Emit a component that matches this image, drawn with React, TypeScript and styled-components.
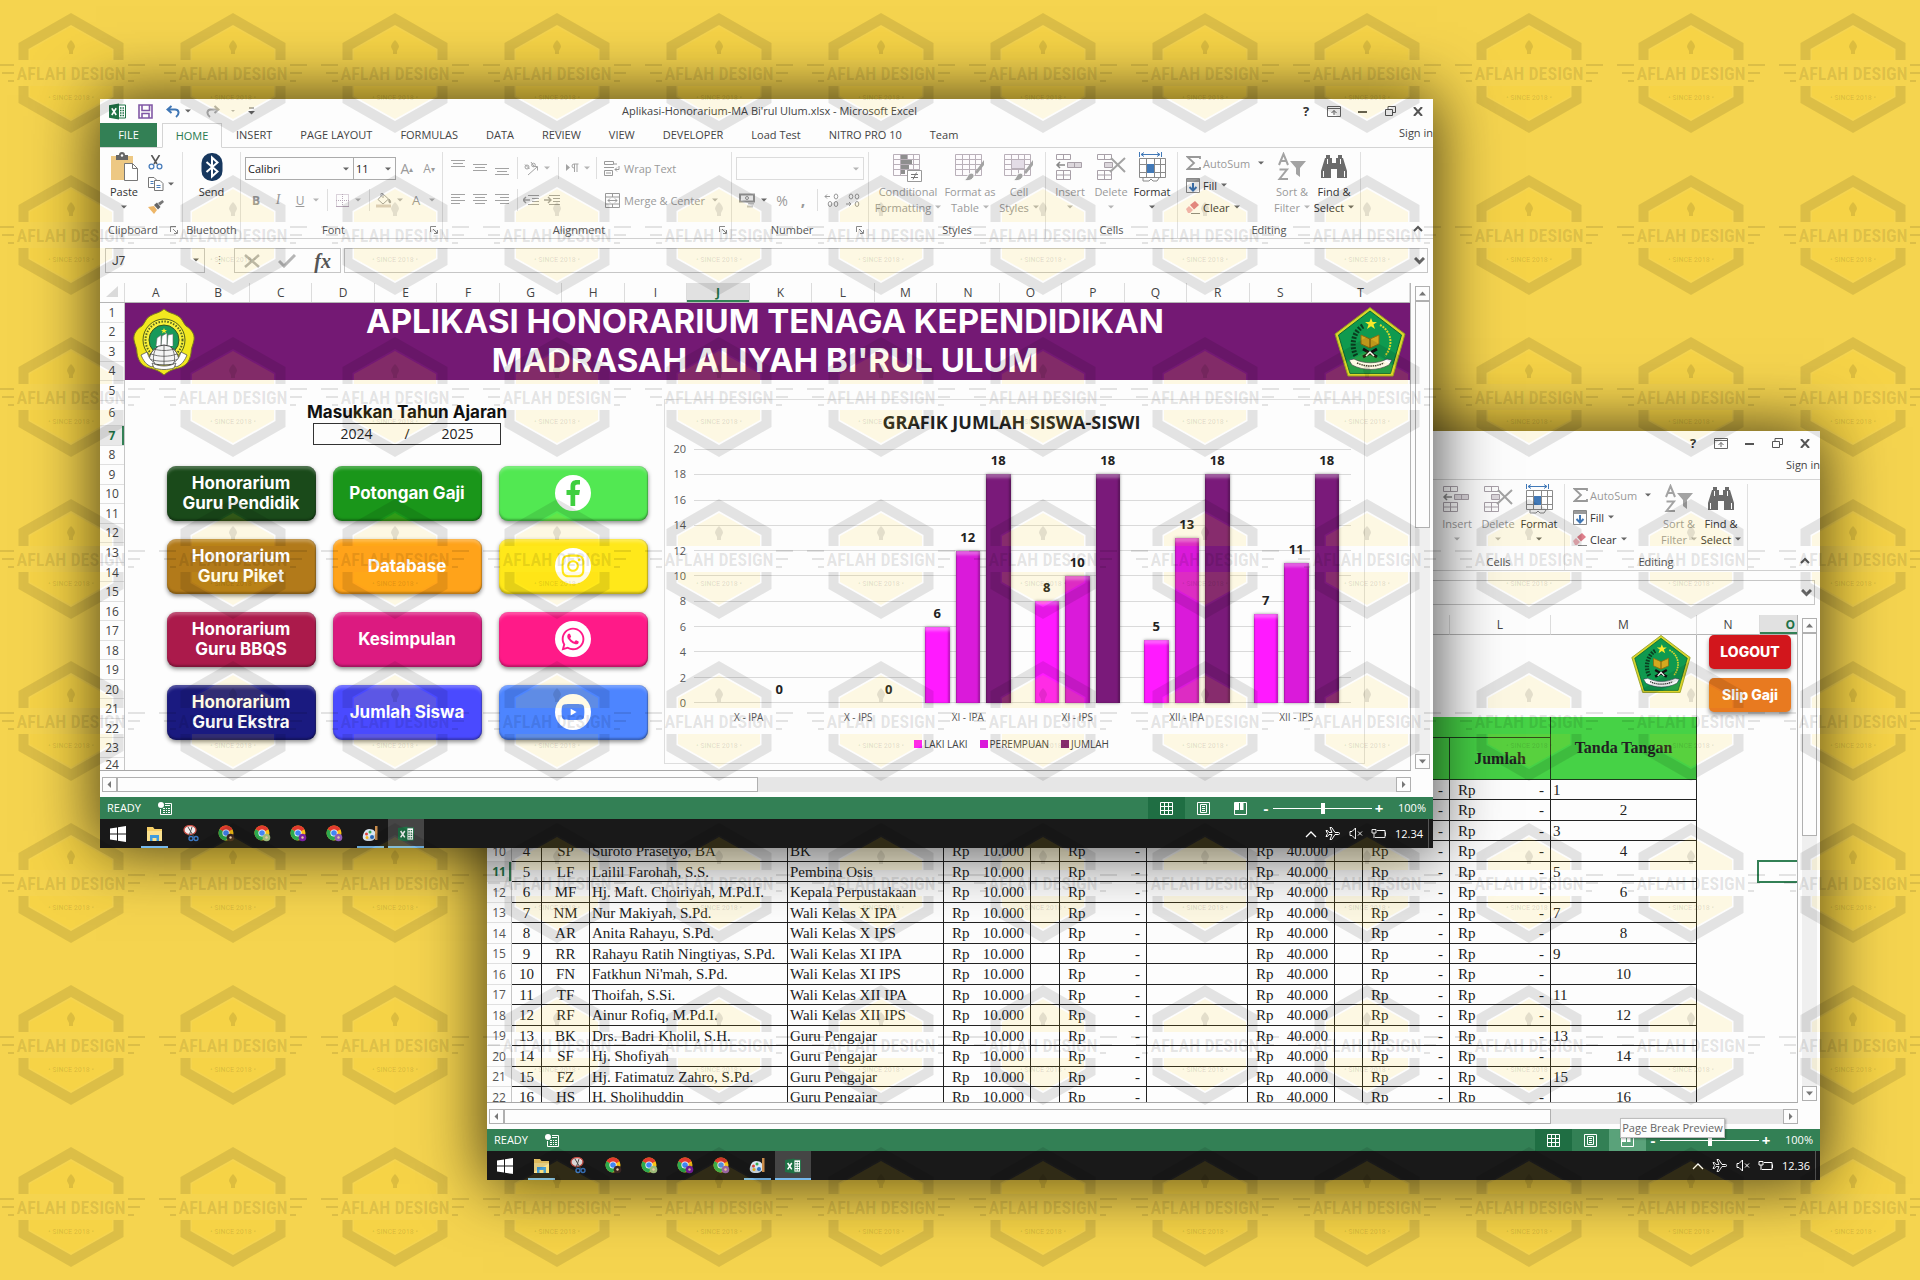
import React from "react";
import styled, { createGlobalStyle, css } from "styled-components";
import { FaInstagram, FaWhatsapp, FaYoutube } from "react-icons/fa";

const UI = `"Open Sans", "Noto Sans", sans-serif`;
const SERIF = `"Liberation Serif", serif`;
const GEO = `Inter, "Open Sans", sans-serif`;

const Global = createGlobalStyle`
  *, *::before, *::after { box-sizing: border-box; }
  body { margin: 0; font-family: ${UI}; font-size: 11px; color: #444; }
  button, input, select { font: inherit; color: inherit; margin: 0; }
  h1, h2, p { margin: 0; }
`;

/* ---------- desktop and windows ---------- */

const Desktop = styled.main`
  position: relative;
  min-height: 100vh;
  overflow: hidden;
  background: #f5d44f;
`;

const Frame = styled.section<{ $left: number; $top: number; $right: number }>`
  position: absolute;
  left: ${(p) => p.$left}px;
  right: ${(p) => p.$right}px;
  top: ${(p) => p.$top}px;
  background: #fdfdfd;
  box-shadow: 0 0 60px 4px rgba(0, 0, 0, 0.7);
`;

const TitleBar = styled.header`
  display: grid;
  grid-template-columns: 1fr auto 1fr;
  align-items: center;
  height: 24px;
  padding: 0 1px 0 7px;
`;

const TitleText = styled.p`
  color: #444;
  line-height: 24px;
`;

const QuickBar = styled.div`
  display: flex;
  align-items: center;
`;

const WindowButtons = styled.div`
  display: flex;
  justify-content: flex-end;
  align-items: center;
`;

const Plain = styled.button<{ $w?: number; $dim?: boolean }>`
  display: flex;
  align-items: center;
  justify-content: center;
  flex: none;
  width: ${(p) => (p.$w ? p.$w + "px" : "auto")};
  padding: 0;
  border: 0;
  background: none;
  color: ${(p) => (p.$dim ? "#9a9a9a" : "#333")};
  white-space: nowrap;
`;

const Tabs = styled.nav`
  display: flex;
  align-items: stretch;
  height: 25px;
  border-bottom: 1px solid #d4d4d4;
`;

const Tab = styled.button<{ $kind?: "file" | "active" }>`
  padding: 0 14px;
  border: 0;
  background: none;
  line-height: 24px;
  color: #444;
  ${(p) =>
    p.$kind === "file" &&
    css`
      width: 57px;
      margin-right: 5px;
      background: #338055;
      color: #fff;
    `}
  ${(p) =>
    p.$kind === "active" &&
    css`
      width: 60px;
      height: 25px;
      padding: 0;
      border: 1px solid #d4d4d4;
      border-bottom-color: #fdfdfd;
      background: #fdfdfd;
      color: #2a7a4e;
    `}
`;

const SignIn = styled.a`
  margin-left: auto;
  line-height: 20px;
  color: #444;
  text-decoration: none;
`;

/* ---------- ribbon ---------- */

const RibbonBar = styled.div`
  display: flex;
  height: 91px;
  padding-top: 4px;
  border-bottom: 1px solid #d0d0d0;
`;

const Group = styled.div<{ $w: number }>`
  display: flex;
  flex-direction: column;
  flex: none;
  width: ${(p) => p.$w}px;
  border-right: 1px solid #e0e0e0;
`;

const GroupBody = styled.div<{ $pad?: number }>`
  display: flex;
  height: 70px;
  padding-left: ${(p) => p.$pad ?? 0}px;
`;

const GroupLabel = styled.div<{ $launcher?: boolean }>`
  display: grid;
  grid-template-columns: ${(p) => (p.$launcher ? "1fr 16px" : "1fr")};
  align-items: center;
  justify-items: center;
  height: 16px;
  line-height: 16px;
  color: #555;
  white-space: nowrap;
`;

const Col = styled.div<{ $w?: number }>`
  display: flex;
  flex-direction: column;
  flex: none;
  width: ${(p) => (p.$w ? p.$w + "px" : "auto")};
`;

const Line = styled.div<{ $h?: number }>`
  display: flex;
  align-items: center;
  height: ${(p) => p.$h ?? 32}px;
`;

const Rule = styled.span<{ $w?: number }>`
  display: flex;
  justify-content: center;
  width: ${(p) => p.$w ?? 10}px;
  &::before {
    content: "";
    width: 1px;
    height: 22px;
    background: #dedede;
  }
`;

const Big = styled.button<{ $w: number; $dim?: boolean }>`
  display: flex;
  flex-direction: column;
  align-items: center;
  flex: none;
  width: ${(p) => p.$w}px;
  padding: 0;
  border: 0;
  background: none;
  line-height: 16px;
  color: ${(p) => (p.$dim ? "#9a9a9a" : "#333")};
  white-space: nowrap;
  svg:first-child { margin-bottom: 2px; }
`;

const Row = styled.span`
  display: flex;
  align-items: center;
  gap: 4px;
  height: 16px;
`;

const Picker = styled.label<{ $w: number; $dim?: boolean }>`
  position: relative;
  flex: none;
  width: ${(p) => p.$w}px;
  height: 23px;
  margin-right: -1px;
  select {
    width: 100%;
    height: 100%;
    padding: 0 2px;
    appearance: none;
    border: 1px solid ${(p) => (p.$dim ? "#dcdcdc" : "#ababab")};
    border-radius: 0;
    background: #fdfdfd;
    color: #222;
  }
  svg {
    position: absolute;
    right: 5px;
    top: 10px;
    pointer-events: none;
  }
`;

const Glyph = styled.span<{ $size?: number; $bold?: boolean; $italic?: boolean; $under?: boolean }>`
  font-size: ${(p) => p.$size ?? 12}px;
  font-weight: ${(p) => (p.$bold ? 700 : 400)};
  font-style: ${(p) => (p.$italic ? "italic" : "normal")};
  text-decoration: ${(p) => (p.$under ? "underline" : "none")};
  font-family: ${(p) => (p.$italic ? SERIF : UI)};
`;

const Caret = ({ dim }: { dim?: boolean }) => (
  <svg width="6" height="4" viewBox="0 0 6 4"><path d="M0 .5h6L3 3.5z" fill={dim ? "#b5b5b5" : "#666"} /></svg>
);

const Launcher = () => (
  <svg width="8" height="8" viewBox="0 0 8 8" fill="none" stroke="#888"><path d="M.5 6V.5H6M3 3l4 4M7.500 4v3.500H4" /></svg>
);

const ExcelIcon = ({ s = 17 }: { s?: number }) => (
  <svg width={s} height={s} viewBox="0 0 17 17">
    <path d="M9 2h7.500v13H9z" fill="#fff" stroke="#1f7246" />
    <path d="M11 5h1.500M13.500 5H15M11 7.500h1.500M13.500 7.500H15M11 10h1.500M13.500 10H15M11 12.500h1.500M13.500 12.500H15" stroke="#1f7246" strokeWidth="1.300" />
    <path d="M0 2.200 10 .5v16L0 14.800z" fill="#1f7246" />
    <path d="M2.800 5.300 7.200 12M7.200 5.300 2.800 12" stroke="#fff" strokeWidth="1.600" />
  </svg>
);

const SaveIcon = () => (
  <svg width="15" height="15" viewBox="0 0 15 15" fill="none" stroke="#8058a5" strokeWidth="1.600">
    <path d="M1 1h13v13H1z" /><path d="M4 1v5.500h7.500V1M4 14v-4.500h7V14" />
  </svg>
);

const UndoIcon = ({ redo }: { redo?: boolean }) => (
  <svg width="15" height="13" viewBox="0 0 15 13" fill="none" stroke={redo ? "#b0b0b0" : "#3f76b5"} strokeWidth="2">
    <path d={redo ? "M9.500 1l4 3.500-4 3.500M13 4.500H6C2 4.500 1 9 5 12" : "M5.500 1l-4 3.500 4 3.500M2 4.500h7c4 0 5 4.500 1 7.500"} />
  </svg>
);

const PasteIcon = () => (
  <svg width="28" height="30" viewBox="0 0 28 30">
    <path d="M1 4h22v24H1z" fill="#edc883" />
    <path d="M6 3h3a3 3 0 0 1 6 0h3v5H6z" fill="#666" /><circle cx="12" cy="3.500" r="1.200" fill="#fff" />
    <path d="M14.500 11.500h8l5 5v12h-13z" fill="#fff" stroke="#777" /><path d="M22.500 11.500v5h5" fill="none" stroke="#777" />
  </svg>
);

const ScissorsIcon = () => (
  <svg width="15" height="15" viewBox="0 0 15 15" fill="none">
    <path d="M3.500 0l5.500 9M11.500 0L6 9" stroke="#555" strokeWidth="1.600" />
    <circle cx="3.500" cy="11.500" r="2.400" stroke="#4a7ebb" strokeWidth="1.300" /><circle cx="11.500" cy="11.500" r="2.400" stroke="#4a7ebb" strokeWidth="1.300" />
  </svg>
);

const CopyIcon = () => (
  <svg width="16" height="14" viewBox="0 0 16 14" fill="#fff" stroke="#777">
    <path d="M.5.5H6l2.500 2.500v7.500h-8z" /><path d="M6.500 3.500H12l3 3v7H6.500z" /><path d="M2.500 4.500h3M2.500 6.500h3M8.500 8.500h4M8.500 10.500h4" stroke="#4a7ebb" />
  </svg>
);

const BrushIcon = () => (
  <svg width="16" height="14" viewBox="0 0 16 14">
    <path d="M0 7l6-1 3 4-3 4z" fill="#edb668" /><path d="M6 5l3-2.500 3.500 4.500L10 9.500z" fill="#666" /><path d="M10 3l4.500-3L16 2l-4 3.500z" fill="#777" />
  </svg>
);

const BluetoothIcon = () => (
  <svg width="22" height="30" viewBox="0 0 22 30">
    <rect x=".5" y="1" width="21" height="28" rx="10" fill="#17375e" />
    <path d="M5.500 10l11 9.500L11 24.500V5.500l5.500 5-11 9.500" fill="none" stroke="#fff" strokeWidth="2" />
  </svg>
);

const LinesIcon = ({ rows, drop = 0 }: { rows: [number, number][]; drop?: number }) => (
  <svg width="14" height="20" viewBox="0 0 14 20" stroke="#a3a3a3">
    {rows.map(([x, w], i) => <path key={i} d={`M${x} ${i * 3 + 4.5 + drop}h${w}`} />)}
  </svg>
);

const BorderIcon = () => (
  <svg width="13" height="13" viewBox="0 0 13 13" fill="none" stroke="#b8a8b8"><path d="M.5.5h12v12H.5zM6.500 0v13M0 6.500h13" strokeDasharray="1 1" /><path d="M0 12.500h13" /></svg>
);

const BucketIcon = () => (
  <svg width="16" height="16" viewBox="0 0 16 16" fill="none" stroke="#a3a3a3">
    <path d="M7 2l5.500 5L7 12 2 7.500z" /><path d="M5 5V1.500h2V6" /><path d="M13 7c2 2 2 4 1 4s-1.500-2-1-4z" fill="#a3a3a3" /><path d="M0 14h15" stroke="#d8cfc6" strokeWidth="3" />
  </svg>
);

const OrientIcon = () => (
  <svg width="16" height="15" viewBox="0 0 16 15" fill="none" stroke="#a3a3a3">
    <circle cx="4" cy="6" r="2" /><path d="M6.500 8L2 3.500M8 1l3.500 5" /><circle cx="10.500" cy="4" r="1.800" /><path d="M5 14l9-8M14.500 9.500V5.500h-4" />
  </svg>
);

const IndentIcon = ({ out }: { out?: boolean }) => (
  <svg width="16" height="12" viewBox="0 0 16 12" fill="none" stroke="#a3a3a3">
    <path d="M5 1.500h11M9 4.500h7M9 7.500h7M5 10.500h11" /><path d={out ? "M0 6h7M3 3L0 6l3 3" : "M0 6h7M4 3l3 3-3 3"} strokeWidth="1.400" />
  </svg>
);

const ParaIcon = () => (
  <svg width="13" height="10" viewBox="0 0 13 10"><path d="M0 1l4 3.500L0 8z" fill="#a3a3a3" /><path d="M8.500 9V1M11 9V1M12.500 1H8a2 2 0 0 0 0 4" fill="none" stroke="#a3a3a3" /></svg>
);

const WrapIcon = () => (
  <svg width="16" height="15" viewBox="0 0 16 15" fill="none" stroke="#999"><path d="M.5.5h9v3h-9zM0 6.500h10M.5 9.500h8v5h-8zM2 12h5M10 3h3M15 5v3.500h-4M13 6.500l-2 2 2 2" /></svg>
);

const MergeIcon = () => (
  <svg width="15" height="15" viewBox="0 0 15 15" fill="none" stroke="#999"><path d="M.5.5h14v14H.5zM.5 4h14M.5 11h14M7.500.5V4M7.500 11v3.500M3 7.500h9M5 5.500l-2 2 2 2M10 5.500l2 2-2 2" /></svg>
);

const MoneyIcon = () => (
  <svg width="17" height="15" viewBox="0 0 17 15" fill="none" stroke="#999"><path d="M1 1.500h14v7H1z" strokeWidth="2" /><circle cx="8" cy="5" r="1.500" /><path d="M9 10.500h6M8 13.500h6" strokeWidth="2" stroke="#c5c5c5" /></svg>
);

const GridBrushIcon = ({ kind }: { kind: "cond" | "table" | "cell" }) => (
  <svg width="30" height="30" viewBox="0 0 30 30" fill="none" stroke="#b9b0b9">
    <path d="M.5 2.500h26v21H.5zM.5 7.500h26M.5 12.500h26M.5 17.500h26M7.500 2.500v21M14.500 2.500v21M20.500 2.500v21" fill="#fdfbfd" />
    {kind === "cond" && <><path d="M8 3h6v4H8zM8 8h11v4H8zM8 13h8v4H8zM8 18h4v4H8z" fill="#8e8e8e" stroke="none" /><path d="M14.500 18.500h14v11h-14z" fill="#fff" stroke="#999" /><path d="M18 22.500h7M18 25.500h7M23.500 20.500l-3.500 7" stroke="#777" /></>}
    {kind === "cell" && <path d="M7.500 7.500h13v9h-13z" fill="#e3dce6" />}
    {kind !== "cond" && <><path d="M29 8l-9 12 2 2 7-9z" fill="#a3a3a3" stroke="none" /><path d="M9 28c3 0 3-6 7-7 3 0 4 3 2 5-2 3-6 3-9 2z" fill="#a3a3a3" stroke="#fff" /></>}
  </svg>
);

const CellsIcon = ({ kind }: { kind: "ins" | "del" }) => (
  <svg width="30" height="30" viewBox="0 0 30 30" fill="none" stroke="#a8a0a8">
    <path d="M1.500 2.500h14v5h-14zM8.500 2.500v5M1.500 18.500h14v9h-14zM8.500 18.500v9M1.500 23h14" />
    {kind === "ins"
      ? <><path d="M12.500 10.500h14v5h-14zM19.500 10.500v5" fill="#dcd7dc" /><path d="M10 13H2M5 10l-3 3 3 3" stroke="#888" strokeWidth="1.500" /></>
      : <><path d="M8.500 10.500h8v5h-8z" fill="#dcd7dc" /><path d="M15 6l14 14M29 6L14 20" stroke="#a3a3a3" strokeWidth="2" /></>}
  </svg>
);

const FormatIcon = () => (
  <svg width="30" height="30" viewBox="0 0 30 30" fill="none" stroke="#8a8a8a">
    <path d="M2.500 0v5M24.500 0v5M4 2.500h19M7 .5l-3 2 3 2M20 .5l3 2-3 2" stroke="#4179b8" />
    <path d="M2.500 6.500h26v19h-26zM2.500 12.500h26M2.500 20.500h26M9.500 6.500v19M17.500 6.500v19M23.500 6.500v19" fill="#fff" />
    <path d="M10 12h7v9h-7z" fill="#4179b8" stroke="none" /><path d="M6 26v3h6l2-2 2 2h4l2-3" />
  </svg>
);

const FillIcon = () => (
  <svg width="14" height="15" viewBox="0 0 14 15" fill="none"><path d="M.5.5h13v14H.5z" stroke="#888" /><path d="M1 1h12v3H1z" fill="#999" /><path d="M7 5v7.500M3.500 9L7 12.500 10.500 9" stroke="#3f76b5" strokeWidth="2" /></svg>
);

const EraserIcon = () => (
  <svg width="14" height="13" viewBox="0 0 14 13"><path d="M0 8l3-3 4 4-3 3H2z" fill="#efb0b8" /><path d="M4 4l5-4 4 4-5 4.500z" fill="#df7f8c" /><path d="M5 12.500h9" stroke="#888" /></svg>
);

const SortIcon = () => (
  <svg width="30" height="30" viewBox="0 0 30 30" fill="none" stroke="#a3a3a3" strokeWidth="2">
    <path d="M2 13L6.500 2 11 13M3.500 9h6M2.500 17.500h7.500L2.500 27H11" /><path d="M13 9h16l-6 7v9l-4-3v-6z" fill="#a3a3a3" stroke="none" />
  </svg>
);

const BinocIcon = () => (
  <svg width="28" height="30" viewBox="0 0 28 30" fill="#6b6b6b">
    <path d="M6 3h4v3h2v5h4V6h2V3h4v3h1l4 13v7H17v-9h-6v9H1v-7L5 6h1z" /><path d="M3.500 19v6M24.500 19v6M7.500 7v5M20.500 7v5" stroke="#fdfdfd" />
  </svg>
);

const SigmaIcon = () => (
  <svg width="15" height="14" viewBox="0 0 15 14" fill="none" stroke="#999" strokeWidth="1.800"><path d="M14 3V1H1.500L8 7l-6.500 6H14v-2" /></svg>
);

const DecimalIcon = ({ more }: { more?: boolean }) => (
  <svg width="16" height="15" viewBox="0 0 16 15" fill="none" stroke="#999">
    {more
      ? <><path d="M6 3.500H1M3 1.500l-2 2 2 2" /><ellipse cx="12" cy="3.500" rx="1.800" ry="2.500" /><ellipse cx="6" cy="11" rx="1.800" ry="2.500" /><ellipse cx="12" cy="11" rx="1.800" ry="2.500" /></>
      : <><ellipse cx="6" cy="3.500" rx="1.800" ry="2.500" /><ellipse cx="12" cy="3.500" rx="1.800" ry="2.500" /><path d="M1 11h5M4 9l2 2-2 2" /><ellipse cx="12" cy="11" rx="1.800" ry="2.500" /></>}
  </svg>
);

const ALIGN: Record<string, [number, number][]> = {
  vertical: [[0, 14], [2, 10], [0, 14]],
  left: [[0, 14], [0, 9], [0, 14], [0, 9]],
  center: [[0, 14], [2, 10], [0, 14], [2, 10]],
  right: [[0, 14], [5, 9], [0, 14], [5, 9]],
};

const Collapse = styled.button`
  align-self: flex-end;
  margin: 0 10px 2px auto;
  padding: 0;
  border: 0;
  background: none;
`;

function Label({ children, launcher }: { children: React.ReactNode; launcher?: boolean }) {
  return (
    <GroupLabel $launcher={launcher}>
      <span>{children}</span>
      {launcher && <Launcher />}
    </GroupLabel>
  );
}

function Ribbon() {
  return (
    <RibbonBar>
      <Group $w={83}>
        <GroupBody>
          <Big $w={48}><PasteIcon /><span>Paste</span><Row><Caret /></Row></Big>
          <Col $w={34}>
            <Line $h={20}><Plain $w={15} aria-label="Cut"><ScissorsIcon /></Plain></Line>
            <Line $h={24}><Plain $w={16} aria-label="Copy"><CopyIcon /></Plain><Plain $w={14} aria-label="Copy options"><Caret /></Plain></Line>
            <Line $h={22}><Plain $w={16} aria-label="Format painter"><BrushIcon /></Plain></Line>
          </Col>
        </GroupBody>
        <Label launcher>Clipboard</Label>
      </Group>
      <Group $w={58}>
        <GroupBody><Big $w={57}><BluetoothIcon /><span>Send</span></Big></GroupBody>
        <Label>Bluetooth</Label>
      </Group>
      <Group $w={202}>
        <GroupBody $pad={4}>
          <Col>
            <Line>
              <Picker $w={109} aria-label="Font"><select><option>Calibri</option></select><Caret /></Picker>
              <Picker $w={43} aria-label="Font size"><select><option>11</option></select><Caret /></Picker>
              <Plain $w={24} $dim><Glyph $size={14}>A</Glyph><Glyph $size={8}>▴</Glyph></Plain>
              <Plain $w={20} $dim><Glyph $size={12}>A</Glyph><Glyph $size={8}>▾</Glyph></Plain>
            </Line>
            <Line>
              <Plain $w={22} $dim><Glyph $bold>B</Glyph></Plain>
              <Plain $w={22} $dim><Glyph $size={14} $italic>I</Glyph></Plain>
              <Plain $w={22} $dim><Glyph $under>U</Glyph></Plain>
              <Plain $w={10} aria-label="Underline options"><Caret dim /></Plain>
              <Rule $w={12} />
              <Plain $w={18} aria-label="Borders"><BorderIcon /></Plain>
              <Plain $w={14} aria-label="Border options"><Caret dim /></Plain>
              <Rule $w={8} />
              <Plain $w={22} aria-label="Fill color"><BucketIcon /></Plain>
              <Plain $w={10} aria-label="Fill options"><Caret dim /></Plain>
              <Plain $w={22} $dim><Glyph $size={13}>A</Glyph></Plain>
              <Plain $w={10} aria-label="Font color options"><Caret dim /></Plain>
            </Line>
          </Col>
        </GroupBody>
        <Label launcher>Font</Label>
      </Group>
      <Group $w={289}>
        <GroupBody $pad={4}>
          <Col $w={153}>
            <Line>
              <Plain $w={22} aria-label="Top align"><LinesIcon rows={ALIGN.vertical} drop={-2} /></Plain>
              <Plain $w={22} aria-label="Middle align"><LinesIcon rows={ALIGN.vertical} drop={2} /></Plain>
              <Plain $w={22} aria-label="Bottom align"><LinesIcon rows={ALIGN.vertical} drop={6} /></Plain>
              <Rule $w={8} />
              <Plain $w={20} aria-label="Orientation"><OrientIcon /></Plain>
              <Plain $w={12} aria-label="Orientation options"><Caret dim /></Plain>
              <Rule $w={10} />
              <Plain $w={18} aria-label="Text direction"><ParaIcon /></Plain>
              <Plain $w={12} aria-label="Direction options"><Caret dim /></Plain>
              <Rule $w={7} />
            </Line>
            <Line>
              <Plain $w={22} aria-label="Align left"><LinesIcon rows={ALIGN.left} /></Plain>
              <Plain $w={22} aria-label="Center"><LinesIcon rows={ALIGN.center} /></Plain>
              <Plain $w={22} aria-label="Align right"><LinesIcon rows={ALIGN.right} /></Plain>
              <Rule $w={8} />
              <Plain $w={20} aria-label="Decrease indent"><IndentIcon out /></Plain>
              <Plain $w={22} aria-label="Increase indent"><IndentIcon /></Plain>
            </Line>
          </Col>
          <Col>
            <Line><Plain $w={24} $dim aria-label="Wrap"><WrapIcon /></Plain><Plain $dim>Wrap Text</Plain></Line>
            <Line><Plain $w={24} $dim aria-label="Merge"><MergeIcon /></Plain><Plain $dim>Merge &amp; Center</Plain><Plain $w={20} aria-label="Merge options"><Caret dim /></Plain></Line>
          </Col>
        </GroupBody>
        <Label launcher>Alignment</Label>
      </Group>
      <Group $w={137}>
        <GroupBody $pad={4}>
          <Col>
            <Line><Picker $w={128} $dim aria-label="Number format"><select><option></option></select><Caret dim /></Picker></Line>
            <Line>
              <Plain $w={22} aria-label="Accounting"><MoneyIcon /></Plain>
              <Plain $w={12} aria-label="Accounting options"><Caret /></Plain>
              <Plain $w={24} $dim><Glyph $size={14}>%</Glyph></Plain>
              <Plain $w={18} $dim><Glyph $size={16} $bold>,</Glyph></Plain>
              <Rule />
              <Plain $w={20} aria-label="Increase decimal"><DecimalIcon more /></Plain>
              <Plain $w={22} aria-label="Decrease decimal"><DecimalIcon /></Plain>
            </Line>
          </Col>
        </GroupBody>
        <Label launcher>Number</Label>
      </Group>
      <Group $w={177}>
        <GroupBody $pad={5}>
          <Big $w={68} $dim><GridBrushIcon kind="cond" /><span>Conditional</span><Row>Formatting<Caret dim /></Row></Big>
          <Big $w={56} $dim><GridBrushIcon kind="table" /><span>Format as</span><Row>Table<Caret dim /></Row></Big>
          <Big $w={42} $dim><GridBrushIcon kind="cell" /><span>Cell</span><Row>Styles<Caret dim /></Row></Big>
        </GroupBody>
        <Label>Styles</Label>
      </Group>
      <Group $w={132}>
        <GroupBody $pad={4}>
          <Big $w={40} $dim><CellsIcon kind="ins" /><span>Insert</span><Row><Caret dim /></Row></Big>
          <Big $w={42} $dim><CellsIcon kind="del" /><span>Delete</span><Row><Caret dim /></Row></Big>
          <Big $w={40}><FormatIcon /><span>Format</span><Row><Caret /></Row></Big>
        </GroupBody>
        <Label>Cells</Label>
      </Group>
      <Group $w={183}>
        <GroupBody $pad={5}>
          <Col $w={88}>
            <Line $h={22}><Plain $w={20} aria-label="Sum"><SigmaIcon /></Plain><Plain $dim>AutoSum</Plain><Plain $w={22} aria-label="Sum options"><Caret /></Plain></Line>
            <Line $h={22}><Plain $w={20} aria-label="Fill down"><FillIcon /></Plain><Plain><Row>Fill<Caret /></Row></Plain></Line>
            <Line $h={22}><Plain $w={20} aria-label="Erase"><EraserIcon /></Plain><Plain><Row>Clear<Caret /></Row></Plain></Line>
          </Col>
          <Big $w={42} $dim><SortIcon /><span>Sort &amp;</span><Row>Filter<Caret dim /></Row></Big>
          <Big $w={42}><BinocIcon /><span>Find &amp;</span><Row>Select<Caret /></Row></Big>
        </GroupBody>
        <Label>Editing</Label>
      </Group>
      <Collapse aria-label="Collapse ribbon">
        <svg width="10" height="8" viewBox="0 0 10 8" fill="none" stroke="#555" strokeWidth="2"><path d="M1 6l4-4 4 4" /></svg>
      </Collapse>
    </RibbonBar>
  );
}

/* ---------- formula bar ---------- */

const FormulaRow = styled.div`
  display: flex;
  align-items: stretch;
  height: 25px;
  margin: 9px 5px 10px;
`;

const NameBox = styled.label`
  position: relative;
  width: 100px;
  input {
    width: 100%;
    height: 100%;
    padding: 0 6px;
    border: 1px solid #c6c6c6;
    background: #fdfdfd;
    font: 12px Roboto, sans-serif;
  }
  svg { position: absolute; right: 6px; top: 10px; }
`;

const Dots = styled.span`
  width: 29px;
  text-align: center;
  line-height: 24px;
  color: #888;
`;

const FxBox = styled.div`
  display: flex;
  align-items: center;
  justify-content: space-around;
  width: 107px;
  margin-right: 3px;
  border: 1px solid #c6c6c6;
`;

const Fx = styled.i`
  font: italic 700 20px/22px ${SERIF};
  color: #555;
`;

const FormulaInput = styled.div`
  position: relative;
  flex: 1;
  input {
    width: 100%;
    height: 100%;
    border: 1px solid #c6c6c6;
    background: #fdfdfd;
  }
  svg { position: absolute; right: 3px; top: 9px; }
`;

function FormulaBar({ cell }: { cell: string }) {
  return (
    <FormulaRow>
      <NameBox><input aria-label="Name box" defaultValue={cell} /><Caret /></NameBox>
      <Dots>⋮</Dots>
      <FxBox>
        <Plain aria-label="Cancel"><svg width="16" height="14" viewBox="0 0 16 14"><path d="M1 1l14 12M15 1L1 13" stroke="#b5b5b5" strokeWidth="2.500" /></svg></Plain>
        <Plain aria-label="Enter"><svg width="18" height="14" viewBox="0 0 18 14"><path d="M1 7l5 5L17 1" fill="none" stroke="#b5b5b5" strokeWidth="3" /></svg></Plain>
        <Plain><Fx>fx</Fx></Plain>
      </FxBox>
      <FormulaInput>
        <input aria-label="Formula" />
        <svg width="11" height="8" viewBox="0 0 11 8" fill="none" stroke="#666" strokeWidth="3"><path d="M1 1l4.500 4.500L10 1" /></svg>
      </FormulaInput>
    </FormulaRow>
  );
}

/* ---------- scroll bars, status bar, task bar ---------- */

const Work = styled.div`
  display: flex;
`;

const Pane = styled.div`
  position: relative;
  flex: 1;
  min-width: 0;
  height: 488px;
  overflow: hidden;
  border-right: 1px solid #b5b5b5;
  border-bottom: 1px solid #a8a8a8;
`;

const VTrack = styled.div`
  display: flex;
  flex-direction: column;
  width: 15px;
  margin: 3px 3px 2px 4px;
  background: #efefef;
`;

const HTrack = styled.div`
  display: flex;
  height: 15px;
  margin: 6px 22px 5px 2px;
  background: #e6e6e6;
`;

const Arrow = styled.button<{ $end?: boolean }>`
  display: flex;
  align-items: center;
  justify-content: center;
  flex: none;
  width: 15px;
  height: 15px;
  padding: 0;
  border: 1px solid #b0b0b0;
  background: #fdfdfd;
  ${(p) => p.$end && css`margin-left: auto;`}
`;

const VThumb = styled.div<{ $share: number }>`
  flex: 0 0 ${(p) => p.$share}%;
  margin-bottom: auto;
  border: 1px solid #b0b0b0;
  background: #fdfdfd;
`;

const HThumb = styled.div<{ $share: number }>`
  flex: 0 0 ${(p) => p.$share}%;
  border: 1px solid #b0b0b0;
  background: #fdfdfd;
`;

const Tri = ({ d }: { d: string }) => <svg width="7" height="7" viewBox="0 0 7 7"><path d={d} fill="#777" /></svg>;

function VScroll({ share }: { share: number }) {
  return (
    <VTrack>
      <Arrow aria-label="Scroll up"><Tri d="M0 5.500h7L3.500 1.500z" /></Arrow>
      <VThumb $share={share} />
      <Arrow aria-label="Scroll down"><Tri d="M0 1.500h7L3.500 5.500z" /></Arrow>
    </VTrack>
  );
}

function HScroll({ share }: { share: number }) {
  return (
    <HTrack>
      <Arrow aria-label="Scroll left"><Tri d="M5 0v7L1.500 3.500z" /></Arrow>
      <HThumb $share={share} />
      <Arrow $end aria-label="Scroll right"><Tri d="M2 0v7l3.500-3.500z" /></Arrow>
    </HTrack>
  );
}

const Status = styled.footer`
  display: flex;
  align-items: stretch;
  height: 22px;
  padding: 0 7px;
  background: #338055;
  color: #fff;
  line-height: 22px;
`;

const Ready = styled.span`
  width: 51px;
`;

const StatusIcon = styled.span`
  display: flex;
  align-items: center;
  margin-right: auto;
`;

const View = styled.button<{ $tone?: "on" | "hover" }>`
  position: relative;
  display: flex;
  align-items: center;
  justify-content: center;
  width: 37px;
  padding: 0;
  border: 0;
  background: ${(p) => (p.$tone === "on" ? "#1f6e43" : p.$tone === "hover" ? "#5aa27a" : "none")};
`;

const Tip = styled.span`
  position: absolute;
  right: -79px;
  top: -11px;
  z-index: 1;
  width: 105px;
  height: 20px;
  border: 1px solid #bdbdbd;
  background: #fdfdfd;
  box-shadow: 1px 1px 2px rgba(0, 0, 0, 0.3);
  color: #666;
  line-height: 18px;
  text-align: center;
  white-space: nowrap;
`;

const ZoomRow = styled.div`
  display: flex;
  align-items: center;
  color: #fff;
  button { width: 14px; color: #fff; font-weight: 700; font-size: 15px; }
  input {
    width: 99px;
    height: 16px;
    appearance: none;
    background: linear-gradient(#fff, #fff) center / 100% 1px no-repeat;
  }
  input::-webkit-slider-thumb {
    appearance: none;
    width: 4px;
    height: 11px;
    background: #fff;
  }
  output { width: 40px; text-align: right; }
`;

function StatusBar({ hover }: { hover?: boolean }) {
  return (
    <Status>
      <Ready>READY</Ready>
      <StatusIcon>
        <svg width="14" height="13" viewBox="0 0 14 13" fill="none" stroke="#fff"><circle cx="3" cy="3" r="3" fill="#fff" stroke="none" /><path d="M7 1.500h6.500v11h-11V7" /><path d="M7 3.500h5M5 6.500h2M8 6.500h1M10 6.500h2M5 8.500h2M8 8.500h1M10 8.500h2M5 10.500h2M8 10.500h1M10 10.500h2" /></svg>
      </StatusIcon>
      <View $tone="on" aria-label="Normal view">
        <svg width="13" height="13" viewBox="0 0 13 13" fill="none" stroke="#fff"><path d="M.5.5h12v12H.5zM4.500 0v13M8.500 0v13M0 4.500h13M0 8.500h13" /></svg>
      </View>
      <View aria-label="Page layout view">
        <svg width="13" height="13" viewBox="0 0 13 13" fill="none" stroke="#fff"><path d="M.5.5h12v12H.5zM3.500 2.500h6v8h-6zM5 4.500h3M5 6.500h3M5 8.500h3" /></svg>
      </View>
      <View $tone={hover ? "hover" : undefined} aria-label="Page break view">
        <svg width="13" height="13" viewBox="0 0 13 13"><path d="M.5.5h12v12H.5z" fill="none" stroke="#fff" /><path d="M1 1h4v7H1zM6 1h3.500v7H6z" fill="#fff" /></svg>
        {hover && <Tip>Page Break Preview</Tip>}
      </View>
      <ZoomRow>
        <Plain>-</Plain>
        <input type="range" aria-label="Zoom" defaultValue={50} />
        <Plain>+</Plain>
        <output>100%</output>
      </ZoomRow>
    </Status>
  );
}

const Taskbar = styled.footer`
  display: flex;
  height: 29px;
  background: #191919;
  color: #fff;
`;

const Task = styled.button<{ $open?: boolean; $active?: boolean }>`
  display: flex;
  align-items: center;
  justify-content: center;
  width: 36px;
  padding: 0;
  border: 0;
  background: ${(p) => (p.$active ? "#454545" : "none")};
  ${(p) =>
    (p.$open || p.$active) &&
    css`
      background-image: linear-gradient(#76b9ed, #76b9ed);
      background-repeat: no-repeat;
      background-position: bottom;
      background-size: ${p.$active ? "100%" : "27px"} 2px;
    `}
`;

const Tray = styled.div`
  display: flex;
  align-items: center;
  margin: 0 4px 0 auto;
  padding-right: 4px;
  border-right: 1px solid #555;
  gap: 8px;
  time { width: 29px; font-size: 11px; white-space: nowrap; }
`;

const Chrome = ({ badge }: { badge: string }) => (
  <svg width="17" height="17" viewBox="0 0 17 17">
    <circle cx="8" cy="8" r="7.500" fill="#fbc116" />
    <path d="M8 8L1.500 4.300A7.500 7.500 0 0 1 14.500 4.300z" fill="#e33b2e" />
    <path d="M8 8L1.500 4.300A7.500 7.500 0 0 0 8 15.500l3-5z" fill="#2da94f" />
    <circle cx="8" cy="8" r="3.600" fill="#fff" /><circle cx="8" cy="8" r="2.800" fill="#4285f4" />
    <circle cx="12.500" cy="12.500" r="3.800" fill={badge} />
    <circle cx="12.500" cy="12.500" r="1.200" fill="#e9c7a5" />
  </svg>
);

function TaskBar({ time }: { time: string }) {
  return (
    <Taskbar>
      <Task aria-label="Start">
        <svg width="16" height="16" viewBox="0 0 16 16" fill="#fff"><path d="M0 2.500l7-1v6H0zM8 1.300L16 0v7.500H8zM0 8.500h7v6l-7-1zM8 8.500h8V16l-8-1.300z" /></svg>
      </Task>
      <Task $open aria-label="Files">
        <svg width="17" height="16" viewBox="0 0 17 16"><path d="M1 1h6l1.500 2H16v12H1z" fill="#f5cf68" /><path d="M1 5h15v10H1z" fill="#fbe28f" /><path d="M4 15V9h9v6h-2.500v-3h-4v3z" fill="#3f9ddd" /></svg>
      </Task>
      <Task aria-label="Snipping tool">
        <svg width="17" height="17" viewBox="0 0 17 17" fill="none"><ellipse cx="8" cy="5" rx="6" ry="4.500" fill="#f3eeee" stroke="#c84f45" strokeWidth="1.300" /><path d="M6 2l6 10M10 2L7 11" stroke="#555" /><circle cx="9" cy="13.500" r="2" stroke="#3b78c3" strokeWidth="1.400" /><circle cx="14" cy="13.500" r="2" stroke="#3b78c3" strokeWidth="1.400" /></svg>
      </Task>
      <Task aria-label="Browser, first profile"><Chrome badge="#3b2622" /></Task>
      <Task aria-label="Browser, second profile"><Chrome badge="#9dbb7a" /></Task>
      <Task aria-label="Browser, third profile"><Chrome badge="#7b1fa2" /></Task>
      <Task aria-label="Browser, fourth profile"><Chrome badge="#8e5bb5" /></Task>
      <Task $open aria-label="Paint">
        <svg width="17" height="17" viewBox="0 0 17 17"><path d="M7 4c5 0 7 3 7 6 0 4-3 6-7 6-5 0-7-2-6-6 1-4 3-6 6-6z" fill="#d8e6f2" /><circle cx="4.500" cy="9" r="1.500" fill="#e0423a" /><circle cx="8" cy="7" r="1.500" fill="#36a853" /><circle cx="5" cy="12.500" r="1.500" fill="#f5b921" /><circle cx="10" cy="12" r="2" fill="#2c71c7" /><path d="M13 6V1h2.500v14H13z" fill="#c98c4c" /></svg>
      </Task>
      <Task $active aria-label="Spreadsheet"><ExcelIcon s={16} /></Task>
      <Tray>
        <svg width="12" height="8" viewBox="0 0 12 8" fill="none" stroke="#fff" strokeWidth="1.300"><path d="M1 7l5-5 5 5" /></svg>
        <svg width="16" height="15" viewBox="0 0 16 15" fill="none" stroke="#fff"><path d="M1 4.500l1.500 3L1 10.500h1.500L4 8.500h3L5 13.500h1.700l3.300-5h3.500a1 1 0 0 0 0-2H10l-3.300-5H5l2 5H4l-1.500-2z" /></svg>
        <svg width="14" height="13" viewBox="0 0 14 13" fill="none" stroke="#fff"><path d="M1 4.500h2L6.500 1v11L3 8.500H1zM9 4.500l4 4M13 4.500l-4 4" /></svg>
        <svg width="16" height="12" viewBox="0 0 16 12" fill="none" stroke="#fff"><path d="M6 2.500h8v7H4M14.500 4.500V8M1 1.500h4V5H1zM3 5v5" /></svg>
        <time>{time}</time>
      </Tray>
    </Taskbar>
  );
}

function WindowShell({ title, cell, vshare, hshare, hover, time, children }: {
  title: string; cell: string; vshare: number; hshare: number; hover?: boolean; time: string; children: React.ReactNode;
}) {
  return (
    <>
      <TitleBar>
        <QuickBar>
          <Plain $w={20} aria-label="Spreadsheet menu"><ExcelIcon /></Plain>
          <Plain $w={36} aria-label="Save"><SaveIcon /></Plain>
          <Plain $w={20} aria-label="Undo"><UndoIcon /></Plain>
          <Plain $w={10} aria-label="Undo history"><Caret /></Plain>
          <Plain $w={38} aria-label="Redo"><UndoIcon redo /></Plain>
          <Plain $w={4} aria-label="Redo history"><Caret dim /></Plain>
          <Plain $w={32} aria-label="Customize"><svg width="7" height="8" viewBox="0 0 7 8"><path d="M1 1h5" stroke="#666" /><path d="M0 4h7L3.500 7.500z" fill="#666" /></svg></Plain>
        </QuickBar>
        <TitleText>{title}</TitleText>
        <WindowButtons>
          <Plain $w={28}><Glyph $size={13} $bold>?</Glyph></Plain>
          <Plain $w={28} aria-label="Ribbon display"><svg width="14" height="11" viewBox="0 0 14 11" fill="none" stroke="#666"><path d="M.5.5h13v10H.5zM.5 2.500h13M7 9V4.500M4.500 7L7 4.500 9.500 7" /></svg></Plain>
          <Plain $w={28} aria-label="Minimize"><svg width="9" height="4" viewBox="0 0 9 4"><path d="M0 3h9" stroke="#555" strokeWidth="2" /></svg></Plain>
          <Plain $w={28} aria-label="Restore"><svg width="11" height="10" viewBox="0 0 11 10" fill="none" stroke="#555"><path d="M.5 3.500h7v6h-7zM3 3V.5h7.500v6H8" /></svg></Plain>
          <Plain $w={28} aria-label="Close"><svg width="10" height="9" viewBox="0 0 10 9" stroke="#555" strokeWidth="2"><path d="M1 0l8 9M9 0L1 9" /></svg></Plain>
        </WindowButtons>
      </TitleBar>
      <Tabs>
        <Tab $kind="file">FILE</Tab>
        <Tab $kind="active">HOME</Tab>
        {["INSERT", "PAGE LAYOUT", "FORMULAS", "DATA", "REVIEW", "VIEW", "DEVELOPER", "Load Test", "NITRO PRO 10", "Team"].map((t) => <Tab key={t}>{t}</Tab>)}
        <SignIn href="#">Sign in</SignIn>
      </Tabs>
      <Ribbon />
      <FormulaBar cell={cell} />
      <Work>
        <Pane>{children}</Pane>
        <VScroll share={vshare} />
      </Work>
      <HScroll share={hshare} />
      <StatusBar hover={hover} />
      <TaskBar time={time} />
    </>
  );
}

/* ---------- emblems ---------- */

const StarPath = "M0-6l1.600 4H6L2.500.5 4 5 0 2.200-4 5l1.500-4.500L-6-2h4.400z";

const SchoolEmblem = () => (
  <svg width="64" height="68" viewBox="0 0 64 68">
    <path d="M32 1c4 4 9 4 14 7 4 2 5 7 8 10 5 3 9 8 8 14-1 5-3 8-3 13-1 6-3 11-9 14-6 2-11 2-18 8-7-6-12-6-18-8-6-3-8-8-9-14 0-5-2-8-3-13-1-6 3-11 8-14 3-3 4-8 8-10 5-3 10-3 14-7z" fill="#f2e81f" stroke="#7c7c1c" />
    <circle cx="32" cy="32" r="21" fill="#f8f03a" stroke="#4f5f1e" />
    <circle cx="32" cy="32" r="18.500" fill="none" stroke="#55641f" strokeWidth="2" strokeDasharray="1.500 1.500" />
    <circle cx="32" cy="32" r="15" fill="#18995a" stroke="#37571f" />
    <path d={StarPath} transform="translate(32 23) scale(.5)" fill="#f7ee2a" />
    <path d="M24 38l1-8 4-3v11M29 38l1-10 5-3v13M35 38l1-11 5-1v12" fill="#fff" stroke="#666" strokeWidth=".6" />
    <path d="M17 54a15 17 0 0 1 30 0c-8 4-22 4-30 0z" fill="#f4f4f4" stroke="#444" />
    <path d="M32 37v20M25 39c-4 5-4 12-3 17M39 39c4 5 4 12 3 17M19 46c8 3 18 3 26 0M17 51c9 3 21 3 30 0M22 41c6 2 14 2 20 0" fill="none" stroke="#444" strokeWidth=".7" />
    <path d="M9 47l6-3c2 6 4 9 8 11l-3 4c-6-2-9-7-11-12zM55 47l-6-3c-2 6-4 9-8 11l3 4c6-2 9-7 11-12z" fill="#fff" stroke="#555" strokeWidth=".8" />
    <path d="M20 55c8 4 16 4 24 0l-2 5c-7 2-13 2-20 0z" fill="#fff" stroke="#555" strokeWidth=".8" />
  </svg>
);

const MinistryEmblem = ({ w }: { w: number }) => (
  <svg width={w} height={w * 70 / 72} viewBox="0 0 72 70">
    <path d="M36 .5L71 27 59 69H14L1 27z" fill="#d9d62c" stroke="#8f9a1f" />
    <path d="M36 4L67.500 28 56.500 66.500H16L4.500 28z" fill="#0f9a4f" stroke="#0c6b35" />
    <path d={StarPath} transform="translate(37 17)" fill="#f7e92a" />
    <path d="M46 18c10 5 15 19 5 31" fill="none" stroke="#d9d62c" strokeWidth="2" strokeDasharray="2 1" />
    <path d="M29 19c-9 5-13 19-7 30" fill="none" stroke="#0a3d1f" strokeWidth="5" strokeDasharray="2 1.500" />
    <path d="M27 28l9 4 9-4v9l-9 4-9-4z" fill="#d3a91f" stroke="#8f6d10" /><path d="M36 32v9" stroke="#6b4d08" />
    <path d="M29 50l14-8M43 50l-14-8" stroke="#111" strokeWidth="3" /><path d="M32 49l4-4 4 4" stroke="#fff" strokeWidth="1.500" fill="none" />
    <path d="M15 53l5-1c10 5 23 5 33 0l5 1-3 5c-12 6-25 6-37 0z" fill="#fff" stroke="#345" strokeWidth=".7" />
    <path d="M23 56c9 4 18 4 27 0" fill="none" stroke="#333" strokeWidth="1.500" strokeDasharray="1.500 .8" />
  </svg>
);

/* ---------- first sheet ---------- */

const HeadRow = styled.div`
  display: grid;
  grid-template-columns: 25px repeat(19, minmax(0, 625fr)) minmax(0, 980fr);
  height: 20px;
  border-bottom: 1px solid #b5b5b5;
  font-size: 12px;
  line-height: 19px;
  text-align: center;
`;

const headOn = css`
  background: #e1e1e1;
  box-shadow: inset 0 -2px #338055;
  color: #1f7246;
  font-weight: 700;
`;

const Head = styled.span<{ $on?: boolean }>`
  border-right: 1px solid #dcdcdc;
  ${(p) => p.$on && headOn}
`;

const Corner = () => <svg width="12" height="11" viewBox="0 0 12 11"><path d="M12 0v11H0z" fill="#dadada" /></svg>;

const SheetBody = styled.div`
  display: grid;
  grid-template-columns: 25px minmax(0, 1fr);
  height: 467px;
`;

const RowHeads = styled.div`
  display: grid;
  grid-template-rows: repeat(5, minmax(0, 39fr)) 50fr 40fr repeat(16, minmax(0, 39fr)) minmax(0, 26fr);
  overflow: hidden;
  border-right: 1px solid #c6c6c6;
  font-size: 12px;
  text-align: center;
`;

const RowHead = styled.span<{ $on?: boolean }>`
  display: flex;
  align-items: center;
  justify-content: center;
  border-bottom: 1px solid #e0e0e0;
  ${(p) =>
    p.$on &&
    css`
      background: #e8e8e8;
      box-shadow: inset -2px 0 #338055;
      color: #1f7246;
      font-weight: 700;
    `}
`;

const Banner = styled.div`
  display: flex;
  align-items: center;
  justify-content: space-between;
  height: 77px;
  padding: 0 4px 0 7px;
  background: #741974;
`;

const BannerTitle = styled.h1`
  padding-bottom: 2px;
  color: #fff;
  font: 700 33px/39px ${GEO};
  text-align: center;
`;

const Dashboard = styled.div`
  display: flex;
  padding: 19px 45px 7px 42px;
`;

const MenuPane = styled.div`
  display: flex;
  flex-direction: column;
  align-items: center;
  width: 480px;
  margin-right: 17px;
`;

const YearLabel = styled.h2`
  margin-top: 2px;
  color: #111;
  font: 700 17px/22px ${GEO};
`;

const YearBox = styled.div`
  display: flex;
  justify-content: center;
  gap: 32px;
  width: 188px;
  height: 22px;
  margin-bottom: 21px;
  border: 1px solid #333;
  color: #222;
  font-size: 14px;
  line-height: 20px;
`;

const MenuGrid = styled.div`
  display: grid;
  grid-template-columns: repeat(3, 149px);
  grid-auto-rows: 55px;
  gap: 18px 17px;
`;

const MenuButton = styled.button<{ $tone: string }>`
  display: flex;
  align-items: center;
  justify-content: center;
  padding: 0 4px 2px;
  border: 0;
  border-radius: 9px;
  background: ${(p) => p.$tone};
  box-shadow: inset 0 4px 3px -1px rgba(255, 255, 255, 0.25), inset 0 -2px 2px rgba(0, 0, 0, 0.25),
    inset -1px 0 1px rgba(0, 0, 0, 0.2), 0 2px 4px rgba(0, 0, 0, 0.45);
  color: #fff;
  font: 700 17px/20px ${GEO};
  white-space: pre;
`;

const Disc = styled.span<{ $tone: string }>`
  display: flex;
  align-items: center;
  justify-content: center;
  width: 36px;
  height: 36px;
  border-radius: 50%;
  background: #fff;
  color: ${(p) => p.$tone};
`;

const ChartCard = styled.figure`
  display: flex;
  flex-direction: column;
  flex: 1;
  min-width: 0;
  height: 365px;
  margin: 0;
  padding: 10px 13px 0 7px;
  border: 1px solid #dedede;
`;

const ChartTitle = styled.figcaption`
  color: #222;
  font: 700 18px/24px ${UI};
  text-align: center;
`;

const ChartGrid = styled.div`
  display: grid;
  grid-template-columns: 22px minmax(0, 1fr);
  margin-top: 15px;
`;

const Axis = styled.div`
  display: flex;
  flex-direction: column;
  justify-content: space-between;
  height: 270px;
  margin: -8px 0;
  padding-right: 8px;
  font-size: 11px;
  line-height: 16px;
  text-align: right;
  color: #595959;
`;

const Plot = styled.div`
  display: grid;
  grid-template-columns: repeat(6, minmax(0, 1fr));
  height: 254px;
  position: relative;
`;

const GridLines = styled.div`
  position: absolute;
  inset: 0;
  display: flex;
  flex-direction: column;
  justify-content: space-between;
  i { height: 1px; background: #dadada; }
`;

const BarGroup = styled.div`
  position: relative;
  display: flex;
  align-items: flex-end;
  gap: 6px;
  padding: 0 12px;
`;

const BarSlot = styled.div`
  display: flex;
  flex-direction: column;
  justify-content: flex-end;
  align-items: center;
  flex: 1;
  height: 100%;
  color: #222;
  font-size: 13px;
  font-weight: 700;
  line-height: 16px;
`;

const BarLabel = styled.span`
  margin-bottom: 6px;
`;

const Bar = styled.div<{ $tone: string }>`
  flex: none;
  width: 100%;
  background: ${(p) => p.$tone};
  box-shadow: inset 0 6px 3px -2px rgba(255, 255, 255, 0.3), inset -2px 0 2px rgba(0, 0, 0, 0.25), inset 1px 0 1px rgba(0, 0, 0, 0.2),
    0 0 3px rgba(0, 0, 0, 0.4);
`;

const Classes = styled.div`
  grid-column: 2;
  display: grid;
  grid-template-columns: repeat(6, minmax(0, 1fr));
  padding-top: 6px;
  color: #595959;
  font-size: 10px;
  line-height: 16px;
  text-align: center;
`;

const Legend = styled.div`
  display: flex;
  justify-content: center;
  gap: 12px;
  margin-top: 11px;
  color: #444;
  font-size: 10px;
  line-height: 16px;
`;

const Key = styled.span<{ $tone: string }>`
  display: flex;
  align-items: center;
  gap: 2px;
  &::before {
    content: "";
    width: 8px;
    height: 8px;
    background: ${(p) => p.$tone};
  }
`;

const TONES = ["#ff1aff", "#da1ada", "#7a1a7a"];
const SERIES: { name: string; values: (number | null)[] }[] = [
  { name: "X - IPA", values: [null, null, 0] },
  { name: "X - IPS", values: [null, null, 0] },
  { name: "XI - IPA", values: [6, 12, 18] },
  { name: "XI - IPS", values: [8, 10, 18] },
  { name: "XII - IPA", values: [5, 13, 18] },
  { name: "XII - IPS", values: [7, 11, 18] },
];

function Chart() {
  const ticks = [20, 18, 16, 14, 12, 10, 8, 6, 4, 2, 0];
  return (
    <ChartCard>
      <ChartTitle>GRAFIK JUMLAH SISWA-SISWI</ChartTitle>
      <ChartGrid>
        <Axis>{ticks.map((t) => <span key={t}>{t}</span>)}</Axis>
        <Plot>
          <GridLines>{ticks.map((t) => <i key={t} />)}</GridLines>
          {SERIES.map((g) => (
            <BarGroup key={g.name}>
              {g.values.map((v, i) => (
                <BarSlot key={i}>
                  {v !== null && <BarLabel>{v}</BarLabel>}
                  {v ? <Bar $tone={TONES[i]} style={{ height: `${v * 5}%` }} /> : null}
                </BarSlot>
              ))}
            </BarGroup>
          ))}
        </Plot>
        <Classes>{SERIES.map((g) => <span key={g.name}>{g.name}</span>)}</Classes>
      </ChartGrid>
      <Legend>
        {["LAKI LAKI", "PEREMPUAN", "JUMLAH"].map((n, i) => <Key key={n} $tone={TONES[i]}>{n}</Key>)}
      </Legend>
    </ChartCard>
  );
}

const FacebookMark = () => (
  <svg width="36" height="36" viewBox="0 0 36 36"><path d="M15.500 31V20h-4v-5h4v-3.500c0-4.500 2.500-6.500 6.500-6.500h3v4.500h-2.500c-1.700 0-2.300.8-2.300 2.300V15H25l-.8 5h-4v11z" fill="#3fcf3f" /></svg>
);

const MENU: { tone: string; text?: string; name?: string; icon?: React.ReactNode }[] = [
  { tone: "#1a4a1a", text: "Honorarium\nGuru Pendidik" },
  { tone: "#1a961a", text: "Potongan Gaji" },
  { tone: "#52e852", name: "Facebook", icon: <FacebookMark /> },
  { tone: "#b27a1a", text: "Honorarium\nGuru Piket" },
  { tone: "#ffa31a", text: "Database" },
  { tone: "#ffe81a", name: "Instagram", icon: <FaInstagram size={26} /> },
  { tone: "#ab1a4b", text: "Honorarium\nGuru BBQS" },
  { tone: "#dc1a80", text: "Kesimpulan" },
  { tone: "#ff1a88", name: "WhatsApp", icon: <FaWhatsapp size={26} /> },
  { tone: "#1a1a80", text: "Honorarium\nGuru Ekstra" },
  { tone: "#4a4aff", text: "Jumlah Siswa" },
  { tone: "#4d85ff", name: "YouTube", icon: <FaYoutube size={24} /> },
];

function DashboardSheet() {
  return (
    <>
      <HeadRow>
        <Head><Corner /></Head>
        {"ABCDEFGHIJKLMNOPQRST".split("").map((c) => <Head key={c} $on={c === "J"}>{c}</Head>)}
      </HeadRow>
      <SheetBody>
        <RowHeads>
          {Array.from({ length: 24 }, (_, i) => <RowHead key={i} $on={i === 6}>{i + 1}</RowHead>)}
        </RowHeads>
        <div>
          <Banner>
            <SchoolEmblem />
            <BannerTitle>APLIKASI HONORARIUM TENAGA KEPENDIDIKAN<br />MADRASAH ALIYAH BI'RUL ULUM</BannerTitle>
            <MinistryEmblem w={72} />
          </Banner>
          <Dashboard>
            <MenuPane>
              <YearLabel>Masukkan Tahun Ajaran</YearLabel>
              <YearBox><span>2024</span><span>/</span><span>2025</span></YearBox>
              <MenuGrid>
                {MENU.map((m) => (
                  <MenuButton key={m.tone} $tone={m.tone} aria-label={m.name}>
                    {m.icon ? <Disc $tone={m.tone}>{m.icon}</Disc> : m.text}
                  </MenuButton>
                ))}
              </MenuGrid>
            </MenuPane>
            <Chart />
          </Dashboard>
        </div>
      </SheetBody>
    </>
  );
}

/* ---------- second sheet ---------- */

const Ledger = styled.table`
  width: 100%;
  table-layout: fixed;
  border-collapse: separate;
  border-spacing: 0;
  color: #222;
  font-family: ${SERIF};
  font-size: 15px;
  line-height: 19px;
  white-space: nowrap;
  th, td { padding: 0; font-weight: 400; overflow: hidden; }
  tbody tr { height: 20px; }
  tbody tr:nth-child(even) { height: 21px; }
`;

const ColHead = styled.th<{ $on?: boolean }>`
  height: 20px;
  border-right: 1px solid #dcdcdc;
  border-bottom: 1px solid #b5b5b5;
  color: #444;
  font: 400 12px/19px ${UI};
  ${(p) =>
    p.$on &&
    css`
      && { ${headOn} padding-right: 2px; text-align: right; }
    `}
`;

const NumHead = styled.th<{ $on?: boolean }>`
  border-right: 1px solid #c6c6c6;
  border-bottom: 1px solid #e0e0e0;
  color: #555;
  font: 400 12px/19px ${UI};
  ${(p) =>
    p.$on &&
    css`
      && { background: #e8e8e8; box-shadow: inset -2px 0 #338055; color: #1f7246; font-weight: 700; }
    `}
`;

const Cell = styled.td<{ $align?: "left" | "center" }>`
  height: inherit;
  border-right: 1px solid #222;
  border-bottom: 1px solid #222;
  text-align: ${(p) => p.$align ?? "center"};
  && { padding: 0 2px; line-height: 18px; }
`;

const GreenHead = styled.th`
  border: 1px solid #1c3d1c;
  border-width: 0 1px 1px 0;
  background: #46d246;
  && { font-weight: 700; font-size: 16px; line-height: 20px; }
`;

const Money = styled.div`
  display: flex;
  justify-content: space-between;
  padding: 0 4px 0 6px;
`;

const Blank = styled.td<{ $line?: boolean }>`
  border-right: ${(p) => (p.$line ? "1px solid #b5b5b5" : "0")};
`;

const FloatLayer = styled.div`
  position: absolute;
  top: 20px;
  right: 6px;
  display: flex;
  align-items: flex-start;
  gap: 18px;
`;

const Stack = styled.div`
  display: flex;
  flex-direction: column;
  gap: 9px;
`;

const Action = styled.button<{ $tone: string }>`
  width: 82px;
  height: 34px;
  padding: 0;
  border: 0;
  border-radius: 5px;
  background: ${(p) => p.$tone};
  box-shadow: 0 3px 4px rgba(0, 0, 0, 0.4);
  color: #fff;
  font: 800 14px/34px ${GEO};
`;

const Picked = styled.div`
  position: absolute;
  right: 0;
  top: 245px;
  width: 40px;
  height: 23px;
  border: 2px solid #338055;
  border-right: 0;
`;

const COLS = [25, 30, 48, 198, 156, 87, 29, 87, 101, 87, 28, 87, 101, 146, 63, 38];

const STAFF: [string, string, string][] = [
  ["", "", ""],
  ["", "", ""],
  ["", "", ""],
  ["SP", "Suroto Prasetyo, BA", "BK"],
  ["LF", "Lailil Farohah, S.S.", "Pembina Osis"],
  ["MF", "Hj. Maft. Choiriyah, M.Pd.I.", "Kepala Perpustakaan"],
  ["NM", "Nur Makiyah, S.Pd.", "Wali Kelas X IPA"],
  ["AR", "Anita Rahayu, S.Pd.", "Wali Kelas X IPS"],
  ["RR", "Rahayu Ratih Ningtiyas, S.Pd.", "Wali Kelas XI IPA"],
  ["FN", "Fatkhun Ni'mah, S.Pd.", "Wali Kelas XI IPS"],
  ["TF", "Thoifah, S.Si.", "Wali Kelas XII IPA"],
  ["RF", "Ainur Rofiq, M.Pd.I.", "Wali Kelas XII IPS"],
  ["BK", "Drs. Badri Kholil, S.H.", "Guru Pengajar"],
  ["SF", "Hj. Shofiyah", "Guru Pengajar"],
  ["FZ", "Hj. Fatimatuz Zahro, S.Pd.", "Guru Pengajar"],
  ["HS", "H. Sholihuddin", "Guru Pengajar"],
];

const TallRow = styled.tr<{ $h: number }>`
  height: ${(p) => p.$h}px;
`;

const Signature = styled.div<{ $mid: boolean }>`
  text-align: ${(p) => (p.$mid ? "center" : "left")};
`;

const Rp = ({ v }: { v: string }) => <Cell><Money><span>Rp</span><span>{v}</span></Money></Cell>;

function LedgerSheet() {
  return (
    <>
      <Ledger>
        <colgroup>{COLS.map((w, i) => <col key={i} width={w} />)}</colgroup>
        <thead>
          <tr>
            <ColHead><Corner /></ColHead>
            {"ABCDEFGHIJKLMNO".split("").map((c) => <ColHead key={c} $on={c === "O"}>{c}</ColHead>)}
          </tr>
          {[1, 2, 3, 4].map((n) => (
            <TallRow key={n} $h={n % 2 ? 20 : 21}><NumHead>{n}</NumHead><Blank colSpan={13} $line /><Blank colSpan={2} /></TallRow>
          ))}
          <TallRow $h={21}><NumHead>5</NumHead><GreenHead colSpan={12} /><GreenHead rowSpan={2}>Tanda Tangan</GreenHead><Blank colSpan={2} /></TallRow>
          <TallRow $h={42}><NumHead>6</NumHead><GreenHead colSpan={11} /><GreenHead>Jumlah</GreenHead><Blank colSpan={2} /></TallRow>
        </thead>
        <tbody>
          {STAFF.map(([code, name, job], i) => (
            <tr key={i}>
              <NumHead $on={i === 4}>{i + 7}</NumHead>
              <Cell>{i + 1}</Cell>
              <Cell>{code}</Cell>
              <Cell $align="left">{name}</Cell>
              <Cell $align="left">{job}</Cell>
              <Rp v="10.000" />
              <Cell />
              <Rp v="-" />
              <Cell />
              <Rp v="40.000" />
              <Cell />
              <Rp v="-" />
              <Rp v="-" />
              <Cell><Signature $mid={i % 2 === 1}>{i + 1}</Signature></Cell>
              <Blank colSpan={2} />
            </tr>
          ))}
        </tbody>
      </Ledger>
      <FloatLayer>
        <MinistryEmblem w={60} />
        <Stack>
          <Action $tone="#d2161c">LOGOUT</Action>
          <Action $tone="#e87a20">Slip Gaji</Action>
        </Stack>
      </FloatLayer>
      <Picked />
    </>
  );
}

/* ---------- watermark ---------- */

const MarkLayer = styled.div`
  position: absolute;
  inset: 0;
  display: grid;
  grid-template-columns: repeat(12, 142px);
  grid-auto-rows: 146px;
  gap: 16px 20px;
  overflow: hidden;
  pointer-events: none;
  svg { overflow: visible; }
`;

const MarkName = styled.text`
  font: 700 18px "Liberation Sans Narrow", "Roboto Condensed", "Open Sans Condensed", Roboto, sans-serif;
`;

const MarkYear = styled.text`
  font: 700 7px "Liberation Sans Narrow", Roboto, sans-serif;
`;

function Mark() {
  return (
    <svg width="142" height="146" viewBox="0 0 142 146" aria-hidden="true">
      <g fill="#ffd000" fillOpacity=".1">
        <path d="M30 60V50L71 27l41 23v10zM30 86v10l41 23 41-23V86z" />
      </g>
      <g fill="#000" fillOpacity=".1">
        <path d="M18.500 60V43L71 13l52.500 30v17h-10V49L71 25 28.500 49v11zM18.500 86v17L71 133l52.500-30V86h-10v11L71 121 28.500 97V86z" />
        <path d="M71 40c3 3 4 5 4 7l-2 4v3h-4v-3l-2-4c0-2 1-4 4-7z" />
        <path d="M-3 64h17v2H-3zM2 72h12v2H2zM8 80h6v2H8zM128 64h17v2h-17zM128 72h12v2h-12zM128 80h6v2h-6z" />
        <MarkName x="71" y="80" textAnchor="middle">AFLAH DESIGN</MarkName>
        <MarkYear x="71" y="100" textAnchor="middle">• SINCE 2018 •</MarkYear>
      </g>
    </svg>
  );
}

export default function App() {
  return (
    <Desktop>
      <Global />
      <Frame $left={487} $right={100} $top={431}>
        <WindowShell title="Aplikasi-Honorarium-MA Bi'rul Ulum.xlsx - Microsoft Excel" cell="O11" vshare={42} hshare={80} hover time="12.36">
          <LedgerSheet />
        </WindowShell>
      </Frame>
      <Frame $left={100} $right={487} $top={99}>
        <WindowShell title="Aplikasi-Honorarium-MA Bi'rul Ulum.xlsx - Microsoft Excel" cell="J7" vshare={47} hshare={49} time="12.34">
          <DashboardSheet />
        </WindowShell>
      </Frame>
      <MarkLayer>{Array.from({ length: 96 }, (_, i) => <Mark key={i} />)}</MarkLayer>
    </Desktop>
  );
}
